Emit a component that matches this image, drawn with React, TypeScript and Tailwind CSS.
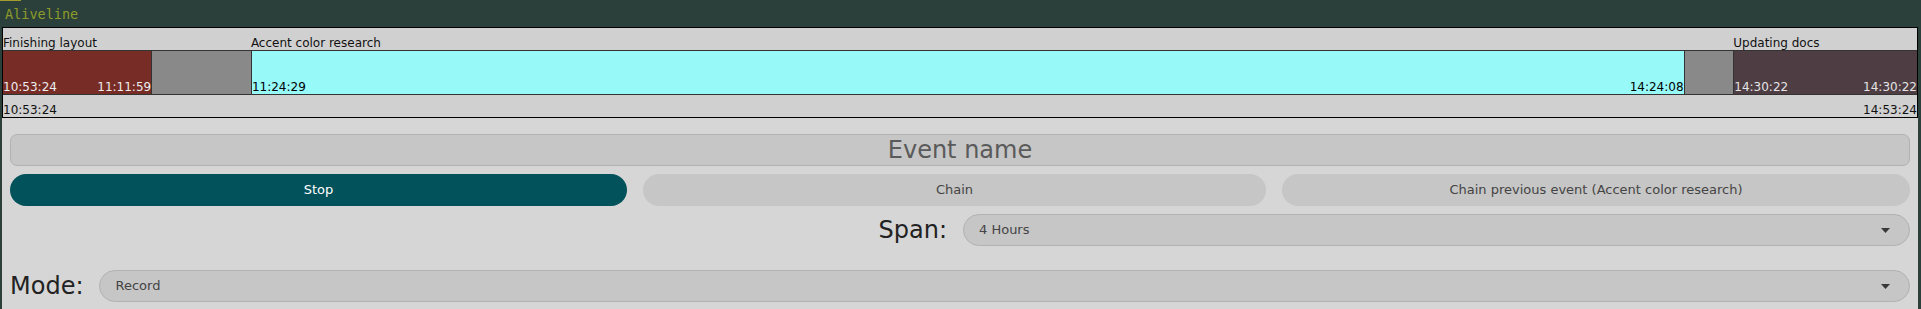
const RANGE_START = "10:53:24";
const RANGE_END = "14:53:24";

type TimelineEvent = {
  name: string;
  start: string;
  end: string;
  ongoing?: boolean;
  fill: string;
  ink: string;
};

const events: TimelineEvent[] = [
  { name: "Finishing layout", start: "10:53:24", end: "11:11:59", fill: "bg-[#772d26]", ink: "text-[#ececec]" },
  { name: "Accent color research", start: "11:24:29", end: "14:24:08", fill: "bg-[#98f9f9]", ink: "text-black" },
  { name: "Updating docs", start: "14:30:22", end: "14:30:22", ongoing: true, fill: "bg-[#4e3d43]", ink: "text-[#e4e4e4]" },
];

const toSec = (t: string) => {
  const [h, m, s] = t.split(":").map(Number);
  return h * 3600 + m * 60 + s;
};

type Segment = { from: number; to: number; event?: TimelineEvent };

function buildSegments(): Segment[] {
  const out: Segment[] = [];
  let cursor = toSec(RANGE_START);
  const last = toSec(RANGE_END);
  for (const ev of events) {
    const s = toSec(ev.start);
    if (s > cursor) out.push({ from: cursor, to: s });
    const e = ev.ongoing ? last : toSec(ev.end);
    out.push({ from: s, to: e, event: ev });
    cursor = e;
  }
  if (cursor < last) out.push({ from: cursor, to: last });
  return out;
}

const segments = buildSegments();
const total = toSec(RANGE_END) - toSec(RANGE_START);
const pct = (seg: Segment) => `${((seg.to - seg.from) / total) * 100}%`;

function Caret() {
  return (
    <svg width="9" height="5" viewBox="0 0 9 5" className="shrink-0">
      <path d="M0 0h9L4.5 5z" fill="#383838" />
    </svg>
  );
}

function Select({ value, className }: { value: string; className?: string }) {
  return (
    <div
      className={`flex h-[32px] items-center justify-between rounded-full border border-[#b2b2b2] bg-[#c6c6c6] pl-[15px] pr-[19px] text-[13px] text-[#444] ${className ?? ""}`}
    >
      <span>{value}</span>
      <Caret />
    </div>
  );
}

function Timeline() {
  return (
    <div className="border border-black bg-[#d0d0d0] text-[12px] leading-[14px] text-[#111]">
      <div className="flex h-[22px]">
        {segments.map((seg, i) => (
          <div key={i} className="flex flex-none items-end whitespace-nowrap" style={{ width: pct(seg) }}>
            {seg.event?.name}
          </div>
        ))}
      </div>
      <div className="flex h-[45px]">
        {segments.map((seg, i) => (
          <div
            key={i}
            className={`flex flex-none items-end justify-between border-y border-[#333] ${i > 0 ? "border-l" : ""} ${
              seg.event ? `${seg.event.fill} ${seg.event.ink}` : "bg-[#898989]"
            }`}
            style={{ width: pct(seg) }}
          >
            {seg.event && (
              <>
                <span>{seg.event.start}</span>
                <span>{seg.event.end}</span>
              </>
            )}
          </div>
        ))}
      </div>
      <div className="flex h-[22px] items-end justify-between">
        <span>{RANGE_START}</span>
        <span>{RANGE_END}</span>
      </div>
    </div>
  );
}

export default function App() {
  return (
    <div className="h-[309px] w-full overflow-hidden bg-[#2b403a] font-['DejaVu_Sans',sans-serif]">
      <div className="h-[1px] w-[21px] bg-[#a39c2c]" />
      <div className="flex h-[26px] items-center pl-[5px] font-['DejaVu_Sans_Mono',monospace] text-[13.5px] text-[#8d9a2b]">
        Aliveline
      </div>

      <div className="ml-[2px] mr-[3px] bg-[#d6d6d6]">
        <Timeline />

        <div className="px-2 pb-4 pt-4">
          <div className="flex h-[32px] items-center justify-center rounded-[7px] border border-[#b2b2b2] bg-[#c6c6c6] text-[24px] text-[#5a5a5a]">
            Event name
          </div>

          <div className="mt-2 flex gap-4 text-[13px]">
            <button className="flex h-[32px] w-[617px] items-center justify-center rounded-full bg-[#01525b] text-white">
              Stop
            </button>
            <button className="flex h-[32px] w-[623px] items-center justify-center rounded-full bg-[#c6c6c6] text-[#444]">
              Chain
            </button>
            <button className="flex h-[32px] flex-1 items-center justify-center rounded-full bg-[#c6c6c6] text-[#444]">
              Chain previous event (Accent color research)
            </button>
          </div>

          <div className="mt-2 flex items-center justify-end gap-4">
            <span className="text-[24px] leading-none text-[#222]">Span:</span>
            <Select value="4 Hours" className="w-[947px]" />
          </div>

          <div className="mt-6 flex items-center gap-4">
            <span className="text-[24px] leading-none text-[#222]">Mode:</span>
            <Select value="Record" className="flex-1" />
          </div>
        </div>
      </div>
    </div>
  );
}
